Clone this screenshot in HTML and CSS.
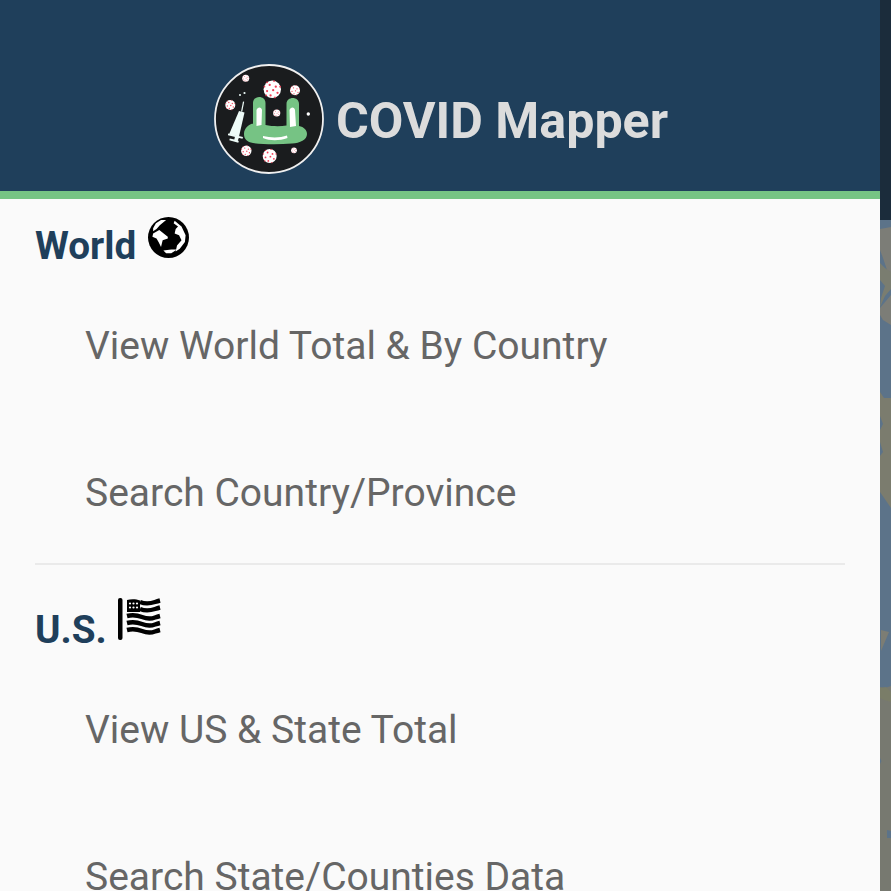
FILE: index.html
```html
<!DOCTYPE html>
<html lang="en">
<head>
<meta charset="utf-8">
<title>COVID Mapper</title>
<link rel="stylesheet" href="styles.css">
</head>
<body>
<div class="shell">
  <nav class="drawer">
    <header class="brand">
      <svg class="logo" viewBox="0 0 110 110" aria-hidden="true">
        <defs>
          <g id="virus">
            <circle r="10" fill="#fff"/>
            <g fill="#ef3e56">
              <circle cx="-3" cy="-5" r="1.3"/><circle cx="4" cy="-3" r="1.3"/><circle cx="-6" cy="2" r="1.3"/>
              <circle cx="1" cy="1" r="1.3"/><circle cx="6" cy="4" r="1.3"/><circle cx="-2" cy="7" r="1.3"/>
              <circle cx="-9" cy="-3" r="1"/><circle cx="9" cy="-3" r="1"/><circle cx="-7" cy="7" r="1"/>
              <circle cx="3" cy="9.4" r="1"/><circle cx="2" cy="-9.4" r="1"/><circle cx="-6" cy="-8" r="1"/>
            </g>
          </g>
        </defs>
        <circle cx="55" cy="55" r="54" fill="#1a1c1e" stroke="#f0f0f0" stroke-width="1.800"/>
        <use href="#virus" transform="translate(58.3 25.3) scale(.87)"/>
        <use href="#virus" transform="translate(81 26.3) scale(.5)"/>
        <use href="#virus" transform="translate(31.7 14.3) scale(.35)"/>
        <use href="#virus" transform="translate(16.3 41) scale(.5)"/>
        <use href="#virus" transform="translate(62.7 49) scale(.36)"/>
        <circle cx="94.3" cy="50" r="1.7" fill="#fff"/>
        <use href="#virus" transform="translate(32.3 86.7) scale(.52)"/>
        <use href="#virus" transform="translate(55.7 92) scale(.7)"/>
        <use href="#virus" transform="translate(80 86.3) scale(.29)"/>
        <path fill="#76c384" d="M39 60V39c0-8 12.500-8 12.500 0V61c7 1.500 15 1.500 21 .5V40c0-8 12.500-8 12.500 0v22c5 1 8 4 8 8 0 6-7 9-15 9.500-13 1-28 1-39-.5-6-1-9-4-9-9 0-6 5-10 9.500-10.500z"/>
        <path fill="#fff" d="M42.500 46c1-3.500 5-3.500 5.500 0l-.5 15-5 1zM75.500 46c1-3.500 5-3.500 5.500 0l1 16-6 1zM49 72c8 2 17 2 24-.5l.5 2.500c-8 3-18 3-24.500 0z"/>
        <g fill="#eefbf8">
          <path d="M25 47 30.500 48.500 25 72.500 15 70.500z"/>
          <path d="M14 69.500 29 73l-.5 1.800-14.500-3.500zM21 72.500l4 1-1.200 3 1 .5-.5 1.800-9-2.500.5-1.800 4.500 1z"/>
          <path d="M29 37.500l1.200.2-2 10-1.200-.2z"/>
          <circle cx="26" cy="31" r="1"/><circle cx="30.500" cy="29" r="1.100"/>
        </g>
      </svg>
      <span class="brand-name">COVID Mapper</span>
    </header>

    <section class="group">
      <h2 class="group-title">World
        <svg class="glyph globe" viewBox="0 0 40 40" aria-hidden="true">
          <circle cx="20" cy="20" r="20" fill="#000"/>
          <g fill="#fff">
            <path d="M5 11 7.700 6 12.700 3 17.700 3 15 5 11.500 8 8.300 11.700 5 14z"/>
            <path d="M5 16 11 12.700 19.300 19.300 19.300 21 14.300 22.700 12.700 29.300 10.300 24.300 8.300 21 4.300 19.300z"/>
            <path d="M26 3.700 32.700 9.300 36.700 17.700 36 24.300 31 31 27 33.700 28.300 27.700 32.700 22.700 30.300 17.700 26 16 27 11.700 29.300 9.300 25 6z"/>
            <path d="M15 32.700 22.700 31.700 28.300 31.700 22.700 35.300 17.700 35.300z"/>
          </g>
        </svg>
      </h2>
      <a class="item">View World Total &amp; By Country</a>
      <a class="item">Search Country/Province</a>
    </section>

    <hr class="rule">

    <section class="group group-us">
      <h2 class="group-title">U.S.
        <svg class="glyph flag" viewBox="0 0 44 44" aria-hidden="true">
          <rect x="0" y="1" width="4.500" height="42" rx="2" fill="#000"/>
          <path fill="#000" d="M9 3c4-1 9-1 13 .5V15H9z"/>
          <g fill="#fff">
            <circle cx="12" cy="6.500" r="1.100"/><circle cx="15.500" cy="6.500" r="1.100"/><circle cx="19" cy="6.500" r="1.100"/>
            <circle cx="12" cy="10.500" r="1.100"/><circle cx="15.500" cy="10.500" r="1.100"/><circle cx="19" cy="10.500" r="1.100"/>
          </g>
          <g fill="none" stroke="#000" stroke-width="4.400">
            <path d="M22 5c5 2 9 2 15 0 2-.7 3-1 5-1.500"/>
            <path d="M22 12c5 2 9 2 15 0 2-.7 3-1 5-1.500"/>
            <path d="M9 19c6-1.500 11-.5 15 1 5 2 9 2 13 .5 2-.7 3-1 5-1.500"/>
            <path d="M9 26c6-1.500 11-.5 15 1 5 2 9 2 13 .5 2-.7 3-1 5-1.500"/>
            <path d="M9 33c6-1.500 11-.5 15 1 5 2 9 2 13 .5 2-.7 3-1 5-1.500"/>
          </g>
        </svg>
      </h2>
      <a class="item">View US &amp; State Total</a>
      <a class="item">Search State/Counties Data</a>
    </section>
  </nav>

  <div class="edge">
    <div class="edge-top"></div>
    <svg class="edge-map" viewBox="0 0 11 671" preserveAspectRatio="none" aria-hidden="true">
      <rect width="11" height="671" fill="#5c7389"/>
      <path fill="#7c7d77" d="M0 9 11 7V60L7 50 3 38 0 30z"/>
      <path fill="#7a7d70" d="M0 43 5 48 11 52V69L5 76 0 87 1 78 5 66 0 60z"/>
      <path fill="#7c7d77" d="M0 88 11 75V105L3 100 0 95z"/>
      <path fill="#7b7c6e" d="M0 172 4 178 11 178V288L0 272V236L3 232 0 222V210L3 204 0 196z"/>
      <path fill="#7c7d74" d="M1 410 9 412 1 431z"/>
      <path fill="#777970" d="M0 467 5 468 11 466V671H0V544L1.500 541 0 538z"/>
      <path fill="#7a7d68" d="M0 468 6 467 11 472V482L4 480 0 478z"/>
      <path fill="#5c7389" d="M7 610 11 611V618L7 618z"/>
    </svg>
  </div>
</div>
</body>
</html>
```

FILE: styles.css
```css
* {
  box-sizing: border-box;
}

html,
body {
  margin: 0;
  padding: 0;
  height: 891px;
  overflow: hidden;
  background: #fafafa;
}

.shell {
  display: flex;
  height: 891px;
  font-family: Roboto, "Liberation Sans", sans-serif;
}

.drawer {
  width: 880px;
  flex: none;
  display: flex;
  flex-direction: column;
  background: #fafafa;
  overflow: hidden;
}

.brand {
  height: 199px;
  flex: none;
  display: flex;
  align-items: flex-end;
  justify-content: center;
  gap: 12px;
  padding: 0 0 17px 2px;
  background: #1f3f5b;
  border-bottom: 8px solid #76c484;
}

.logo {
  width: 110px;
  height: 110px;
  flex: none;
}

.brand-name {
  margin-bottom: -4px;
  font-size: 50.200px;
  font-weight: 700;
  line-height: 114px;
  color: #dcdcdc;
}

.group {
  display: flex;
  flex-direction: column;
  padding: 0 35px;
}

.group-us {
  padding-top: 18px;
}

.group-title {
  display: flex;
  align-items: flex-start;
  gap: 12px;
  height: 73px;
  margin: 0;
  padding-top: 25px;
  font-size: 38.700px;
  font-weight: 700;
  line-height: 44px;
  color: #1f3f5b;
}

.glyph {
  flex: none;
  display: block;
}

.globe {
  width: 41px;
  height: 41px;
  margin-top: -7px;
}

.flag {
  width: 44px;
  height: 44px;
  margin-top: -11px;
  margin-left: -1px;
}

.item {
  display: flex;
  align-items: center;
  height: 147px;
  padding-left: 50px;
  font-size: 39px;
  color: #666;
}

.rule {
  width: 810px;
  height: 2px;
  margin: -3px 0 0 35px;
  border: 0;
  flex: none;
  background: #eaeaea;
}

.edge {
  flex: 1;
  display: flex;
  flex-direction: column;
}

.edge-top {
  height: 220px;
  flex: none;
  background: #1b2c3b;
}

.edge-map {
  display: block;
  flex: 1;
  width: 11px;
  min-height: 0;
}
```
